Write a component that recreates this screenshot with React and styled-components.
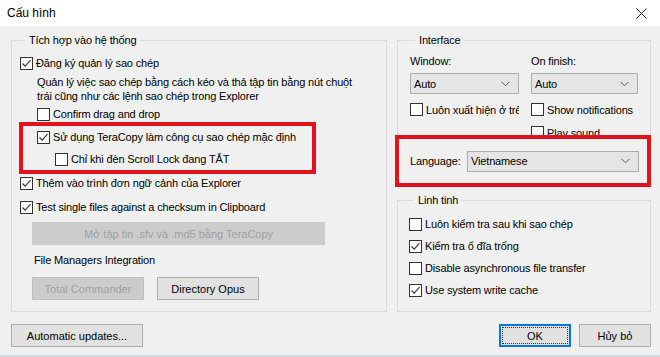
import React from "react";
import styled, { createGlobalStyle } from "styled-components";

const GlobalStyle = createGlobalStyle`
  body {
    margin: 0;
    background: #f0f0f0;
    font-family: "Liberation Sans", Arial, sans-serif;
    font-size: 11px;
    letter-spacing: -0.15px;
    color: #000;
  }
`;

function Check({ checked }) {
  return (
    <Box>
      {checked && (
        <svg width="11" height="11" viewBox="0 0 11 11">
          <path d="M1.5 5.5 L4.2 8.2 L9.5 2.2" fill="none" stroke="#333" strokeWidth="1.1" />
        </svg>
      )}
    </Box>
  );
}

function Chevron() {
  return (
    <svg width="9" height="6" viewBox="0 0 9 6">
      <path d="M0.5 0.8 L4.5 4.8 L8.5 0.8" fill="none" stroke="#555" strokeWidth="1" />
    </svg>
  );
}

function Option({ checked, label, indent, h, clip }) {
  return (
    <Row indent={indent} h={h} clip={clip}>
      <Check checked={checked} />
      <span>{label}</span>
    </Row>
  );
}

function Select({ value, width }) {
  return (
    <Combo style={{ width }}>
      <span>{value}</span>
      <Chevron />
    </Combo>
  );
}

export default function App() {
  return (
    <>
      <GlobalStyle />
      <Window>
        <TitleBar>
          <span>Cấu hình</span>
          <svg width="11" height="11" viewBox="0 0 11 11">
            <path d="M0.5 0.5 L10.5 10.5 M10.5 0.5 L0.5 10.5" stroke="#222" strokeWidth="1" />
          </svg>
        </TitleBar>
        <Body>
          <Columns>
            <LeftGroup>
              <Legend>Tích hợp vào hệ thống</Legend>
              <Option checked label="Đăng ký quản lý sao chép" />
              <Desc>
                Quản lý việc sao chép bằng cách kéo và thả tập tin bằng nút chuột
                <br />
                trái cũng như các lệnh sao chép trong Explorer
              </Desc>
              <Option label="Confirm drag and drop" indent={17} />
              <Highlight>
                <Option checked label="Sử dụng TeraCopy làm công cụ sao chép mặc định" />
                <Option label="Chỉ khi đèn Scroll Lock đang TẮT" indent={18} />
              </Highlight>
              <Option checked h={24} label="Thêm vào trình đơn ngữ cảnh của Explorer" />
              <Option checked h={24} label="Test single files against a checksum in Clipboard" />
              <WideButton disabled>Mở tập tin .sfv và .md5 bằng TeraCopy</WideButton>
              <Caption>File Managers Integration</Caption>
              <ButtonRow>
                <Button disabled w={112}>Total Commander</Button>
                <Button w={102}>Directory Opus</Button>
              </ButtonRow>
            </LeftGroup>
            <RightColumn>
              <InterfaceGroup>
                <Legend>Interface</Legend>
                <InterfaceGrid>
                  <div>
                    <FieldLabel>Window:</FieldLabel>
                    <Select value="Auto" width={109} />
                  </div>
                  <div>
                    <FieldLabel>On finish:</FieldLabel>
                    <Select value="Auto" width={107} />
                  </div>
                  <OptionCell>
                    <Option h={23} label="Luôn xuất hiện ở trên cùng" clip />
                  </OptionCell>
                  <OptionCell>
                    <Option h={23} label="Show notifications" />
                    <Option h={23} label="Play sound" />
                  </OptionCell>
                </InterfaceGrid>
                <LangBox>
                  <LangLabel>Language:</LangLabel>
                  <Select value="Vietnamese" width={172} />
                </LangBox>
              </InterfaceGroup>
              <MiscGroup>
                <Legend>Linh tinh</Legend>
                <Option label="Luôn kiểm tra sau khi sao chép" />
                <Option checked label="Kiểm tra ổ đĩa trống" />
                <Option label="Disable asynchronous file transfer" />
                <Option checked label="Use system write cache" />
              </MiscGroup>
            </RightColumn>
          </Columns>
          <Footer>
            <Button w={132}>Automatic updates...</Button>
            <Actions>
              <Button w={72} primary>OK</Button>
              <Button w={72}>Hủy bỏ</Button>
            </Actions>
          </Footer>
        </Body>
        <BottomEdge />
      </Window>
    </>
  );
}

const Window = styled.div`
  width: 660px;
  height: 357px;
  background: #f0f0f0;
  display: flex;
  flex-direction: column;
  overflow: hidden;
`;

const TitleBar = styled.div`
  height: 26px;
  flex: none;
  background: #fff;
  display: flex;
  align-items: center;
  justify-content: space-between;
  padding: 0 13px 0 7px;
  font-size: 12px;
  letter-spacing: 0;
  color: #000;
`;

const Body = styled.div`
  flex: 1;
  display: flex;
  flex-direction: column;
  padding: 0 9px 0 11px;
`;

const Columns = styled.div`
  display: grid;
  grid-template-columns: 376px 254px;
  column-gap: 10px;
`;

const Group = styled.fieldset`
  margin: 7px 0 0;
  padding: 0;
  min-width: 0;
  border: 1px solid #dcdcdc;
  display: flex;
  flex-direction: column;
  box-sizing: border-box;
`;

const Legend = styled.legend`
  margin-left: 5px;
  padding: 0 4px;
  height: 14px;
  line-height: 14px;
`;

const LeftGroup = styled(Group)`
  height: 279px;
  padding: 5px 0 0 8px;
`;

const RightColumn = styled.div`
  display: flex;
  flex-direction: column;
`;

const InterfaceGroup = styled(Group)`
  height: 152px;
  padding: 7px 12px 0 12px;
`;

const MiscGroup = styled(Group)`
  height: 119px;
  margin-top: 8px;
  padding: 6px 0 0 11px;
`;

const InterfaceGrid = styled.div`
  display: grid;
  grid-template-columns: 109px 107px;
  column-gap: 12px;
`;

const OptionCell = styled.div`
  margin-top: 4px;
  min-width: 0;
`;

const FieldLabel = styled.div`
  height: 14px;
  line-height: 14px;
  margin-bottom: 5px;
`;

const Row = styled.div`
  display: flex;
  align-items: center;
  gap: 3px;
  height: ${(p) => p.h || 22}px;
  padding-left: ${(p) => p.indent || 0}px;
  white-space: nowrap;
  overflow: ${(p) => (p.clip ? "hidden" : "visible")};
`;

const Box = styled.span`
  width: 13px;
  height: 13px;
  box-sizing: border-box;
  flex: none;
  background: #fff;
  border: 1px solid #333;
  display: flex;
  align-items: center;
  justify-content: center;
`;

const Desc = styled.div`
  margin: 1px 0 0 17px;
  line-height: 14px;
  white-space: nowrap;
`;

const Highlight = styled.div`
  margin: 1px 0 1px 3px;
  width: 275px;
  padding-left: 14px;
  outline: 4px solid #e3131d;
`;

const WideButton = styled.button`
  margin: 3px 0 0 12px;
  width: 293px;
  height: 23px;
  border: 1px solid #cccccc;
  background: #cccccc;
  color: #a0a0a0;
  font: inherit;
  padding: 0;
`;

const Caption = styled.div`
  margin: 8px 0 0 14px;
  line-height: 14px;
`;

const ButtonRow = styled.div`
  display: flex;
  gap: 13px;
  margin: 10px 0 0 12px;
`;

const Button = styled.button`
  width: ${(p) => p.w}px;
  height: 23px;
  box-sizing: border-box;
  padding: 0;
  font: inherit;
  color: ${(p) => (p.disabled ? "#a0a0a0" : "#000")};
  background: ${(p) => (p.disabled ? "#cccccc" : "#e1e1e1")};
  border: 1px solid ${(p) => (p.disabled ? "#bfbfbf" : p.primary ? "#0078d7" : "#adadad")};
  ${(p) =>
    p.primary
      ? `box-shadow: inset 0 0 0 1px #0078d7; outline: 1px dotted #333; outline-offset: -4px;`
      : ""}
`;

const Combo = styled.div`
  height: 21px;
  box-sizing: border-box;
  background: #e5e5e5;
  border: 1px solid #acacac;
  display: flex;
  align-items: center;
  justify-content: space-between;
  padding: 0 8px 0 3px;
`;

const LangBox = styled.div`
  position: relative;
  display: flex;
  align-items: center;
  height: 52px;
  box-sizing: border-box;
  margin: -9px -13px 0 -15px;
  padding: 0 11px 0 15px;
  outline: 4px solid #e3131d;
  outline-offset: -4px;
`;

const LangLabel = styled.span`
  width: 57px;
  flex: none;
`;

const Footer = styled.div`
  display: flex;
  justify-content: space-between;
  margin-top: 12px;
`;

const Actions = styled.div`
  display: flex;
  gap: 8px;
`;

const BottomEdge = styled.div`
  height: 2px;
  flex: none;
  background: #d3d9e1;
`;
